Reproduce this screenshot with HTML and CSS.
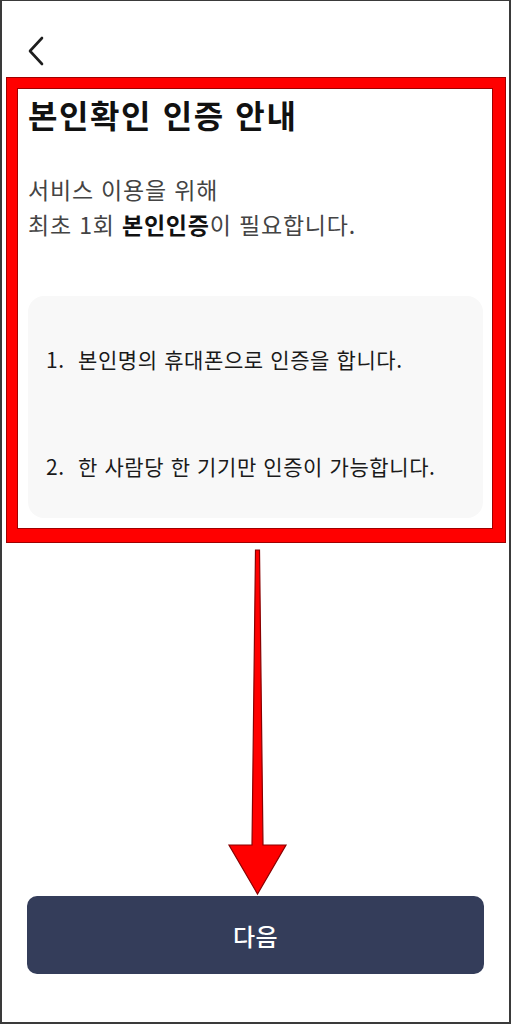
FILE: index.html
```html
<!DOCTYPE html>
<html lang="ko">
<head>
<meta charset="utf-8">
<title>본인확인 인증 안내</title>
<link rel="stylesheet" href="styles.css">
</head>
<body>
<div class="screen">
  <header class="header">
    <svg class="back" width="18" height="30" viewBox="0 0 18 30" aria-label="뒤로">
      <path d="M15 2 L3 15 L15 28" fill="none" stroke="#1e1e1e" stroke-width="2.6" stroke-linecap="round" stroke-linejoin="round"/>
    </svg>
  </header>
  <section class="highlight">
    <h1 class="title">본인확인 인증 안내</h1>
    <p class="desc">서비스 이용을 위해<br>최초 1회 <strong>본인인증</strong>이 필요합니다.</p>
    <ol class="notice">
      <li class="notice-item"><span class="num">1.</span><span>본인명의 휴대폰으로 인증을 합니다.</span></li>
      <li class="notice-item"><span class="num">2.</span><span>한 사람당 한 기기만 인증이 가능합니다.</span></li>
    </ol>
  </section>
  <div class="spacer"></div>
  <button class="next" type="button">다음</button>
  <svg class="arrow" width="70" height="360" viewBox="0 0 70 360" aria-hidden="true">
    <path d="M28.5 2 L32.5 2 L36 297 L59 297 L30.5 346 L2 297 L25 297 Z" fill="#ff0000" stroke="#8a0000" stroke-width="1.2" stroke-linejoin="miter"/>
  </svg>
</div>
</body>
</html>
```
FILE: styles.css
```css
* { box-sizing: border-box; }
html, body { margin: 0; padding: 0; background: #fff; }
body {
  font-family: "Noto Sans CJK KR", "Noto Sans", sans-serif;
  color: #111;
}
.screen {
  position: relative;
  width: 511px;
  height: 1024px;
  border-style: solid;
  border-color: #3a3a3a;
  border-width: 1px 2px 2px 2px;
  display: flex;
  flex-direction: column;
  overflow: hidden;
}
.header {
  height: 77px;
  padding: 35px 0 0 25px;
}
.back { display: block; }
.highlight {
  margin: 0 4px 0 5px;
  border-style: solid;
  border-color: #ff0000;
  border-width: 10px 12px 13px 10px;
  box-shadow: 0 0 0 1px #a00000, inset 0 0 0 1px #a00000;
  padding: 6px 10px 11px 11px;
}
.title {
  margin: 0;
  font-size: 32px;
  font-weight: 700;
  line-height: 40px;
  color: #111;
  letter-spacing: 1.6px;
}
.desc {
  margin: 38px 0 0;
  font-size: 23px;
  line-height: 35px;
  color: #444;
  letter-spacing: 0.8px;
}
.desc strong { color: #111; font-weight: 700; }
.notice {
  list-style: none;
  margin: 54px 0 0;
  padding: 43px 0 32px 18px;
  background: #f8f8f8;
  border-radius: 16px;
  display: flex;
  flex-direction: column;
  gap: 67px;
}
.notice-item {
  display: flex;
  font-size: 21px;
  line-height: 40px;
  color: #1a1a1a;
  letter-spacing: 0.6px;
}
.num { width: 32px; flex: none; }
.spacer { flex: 1; }
.next {
  margin: 0 25px 48px 25px;
  height: 78px;
  border: none;
  border-radius: 10px;
  background: #343d5a;
  color: #fff;
  font-family: "Noto Sans CJK KR", "Noto Sans", sans-serif;
  font-size: 24px;
  font-weight: 500;
  letter-spacing: 0.5px;
}
.arrow {
  position: absolute;
  left: 225px;
  top: 547px;
}
```
